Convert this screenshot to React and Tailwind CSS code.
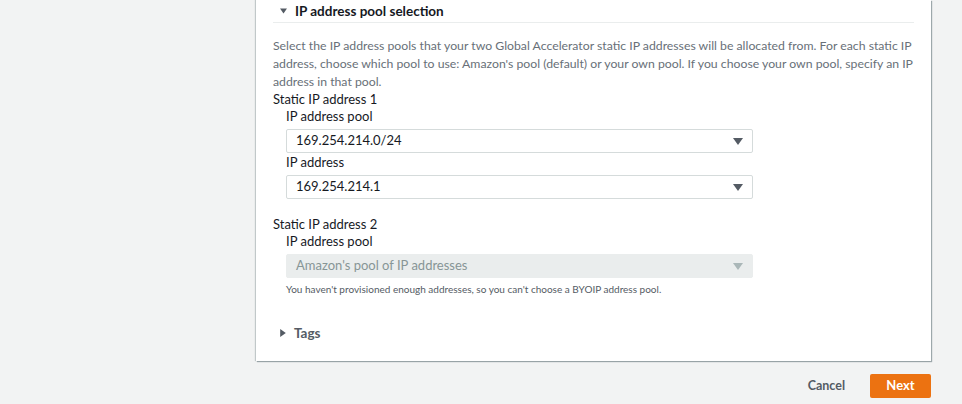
import React from "react";

const font = { fontFamily: 'Lato, "Noto Sans", Arial, sans-serif' };

function Caret({ className = "", w = 10, h = 7 }) {
  return (
    <svg width={w} height={h} viewBox="0 0 10 7" className={className}>
      <path d="M0 0 H10 L5 7 Z" fill="currentColor" />
    </svg>
  );
}

function Select({ value, disabled }) {
  return (
    <div
      className={
        "flex items-center justify-between h-[24px] w-[467px] rounded-[2px] pl-[9px] pr-[9px] text-[13px] " +
        (disabled
          ? "bg-[#eaeded] text-[#879596] border border-[#eaeded]"
          : "bg-white text-[#16191f] border border-[#d5dbdb]")
      }
    >
      <span>{value}</span>
      <Caret className={disabled ? "text-[#aab7b8]" : "text-[#545b64]"} />
    </div>
  );
}

export default function App() {
  return (
    <div className="w-[962px] h-[404px] bg-[#f2f3f3] overflow-hidden text-[#16191f]" style={font}>
      <div className="pl-[256px] pr-[31px]">
        <div className="bg-white h-[361px] shadow-[1px_1px_1px_0_rgba(0,28,36,0.35),-1px_0_1px_0_rgba(0,28,36,0.2)] px-[17px]">
          <div className="h-[23px] flex items-center gap-[8px] pl-[7px] border-b border-[#eaeded] text-[13.5px] font-bold">
            <Caret className="text-[#545b64]" w={7} h={6} />
            <span>IP address pool selection</span>
          </div>
          <p className="mt-[14px] text-[12.25px] leading-[18px] text-[#687078]">
            Select the IP address pools that your two Global Accelerator static IP addresses will be allocated from. For each static IP address, choose which pool to use: Amazon's pool (default) or your own pool. If you choose your own pool, specify an IP address in that pool.
          </p>
          <div className="text-[13px] leading-[17px] mt-[0px]">Static IP address 1</div>
          <div className="pl-[13px]">
            <div className="text-[13px] leading-[17px] mt-[0px]">IP address pool</div>
            <div className="mt-[4px]"><Select value="169.254.214.0/24" /></div>
            <div className="text-[13px] leading-[17px] mt-[1px]">IP address</div>
            <div className="mt-[4px]"><Select value="169.254.214.1" /></div>
          </div>
          <div className="text-[13px] leading-[17px] mt-[17px]">Static IP address 2</div>
          <div className="pl-[13px]">
            <div className="text-[13px] leading-[17px]">IP address pool</div>
            <div className="mt-[4px]"><Select value="Amazon's pool of IP addresses" disabled /></div>
            <div className="text-[10px] leading-[14px] mt-[4px] text-[#545b64]">
              You haven't provisioned enough addresses, so you can't choose a BYOIP address pool.
            </div>
          </div>
          <div className="mt-[27px] flex items-center gap-[8px] pl-[7px] text-[13.5px] font-bold text-[#545b64]">
            <svg width="6" height="8" viewBox="0 0 7 10"><path d="M0 0 V10 L7 5 Z" fill="#545b64" /></svg>
            <span>Tags</span>
          </div>
        </div>
        <div className="flex items-center justify-end gap-[25px] mt-[13px]">
          <button className="text-[12.5px] font-bold text-[#545b64]">Cancel</button>
          <button className="h-[24px] w-[61px] bg-[#ec7211] text-white text-[13px] font-bold rounded-[2px]">Next</button>
        </div>
      </div>
    </div>
  );
}
